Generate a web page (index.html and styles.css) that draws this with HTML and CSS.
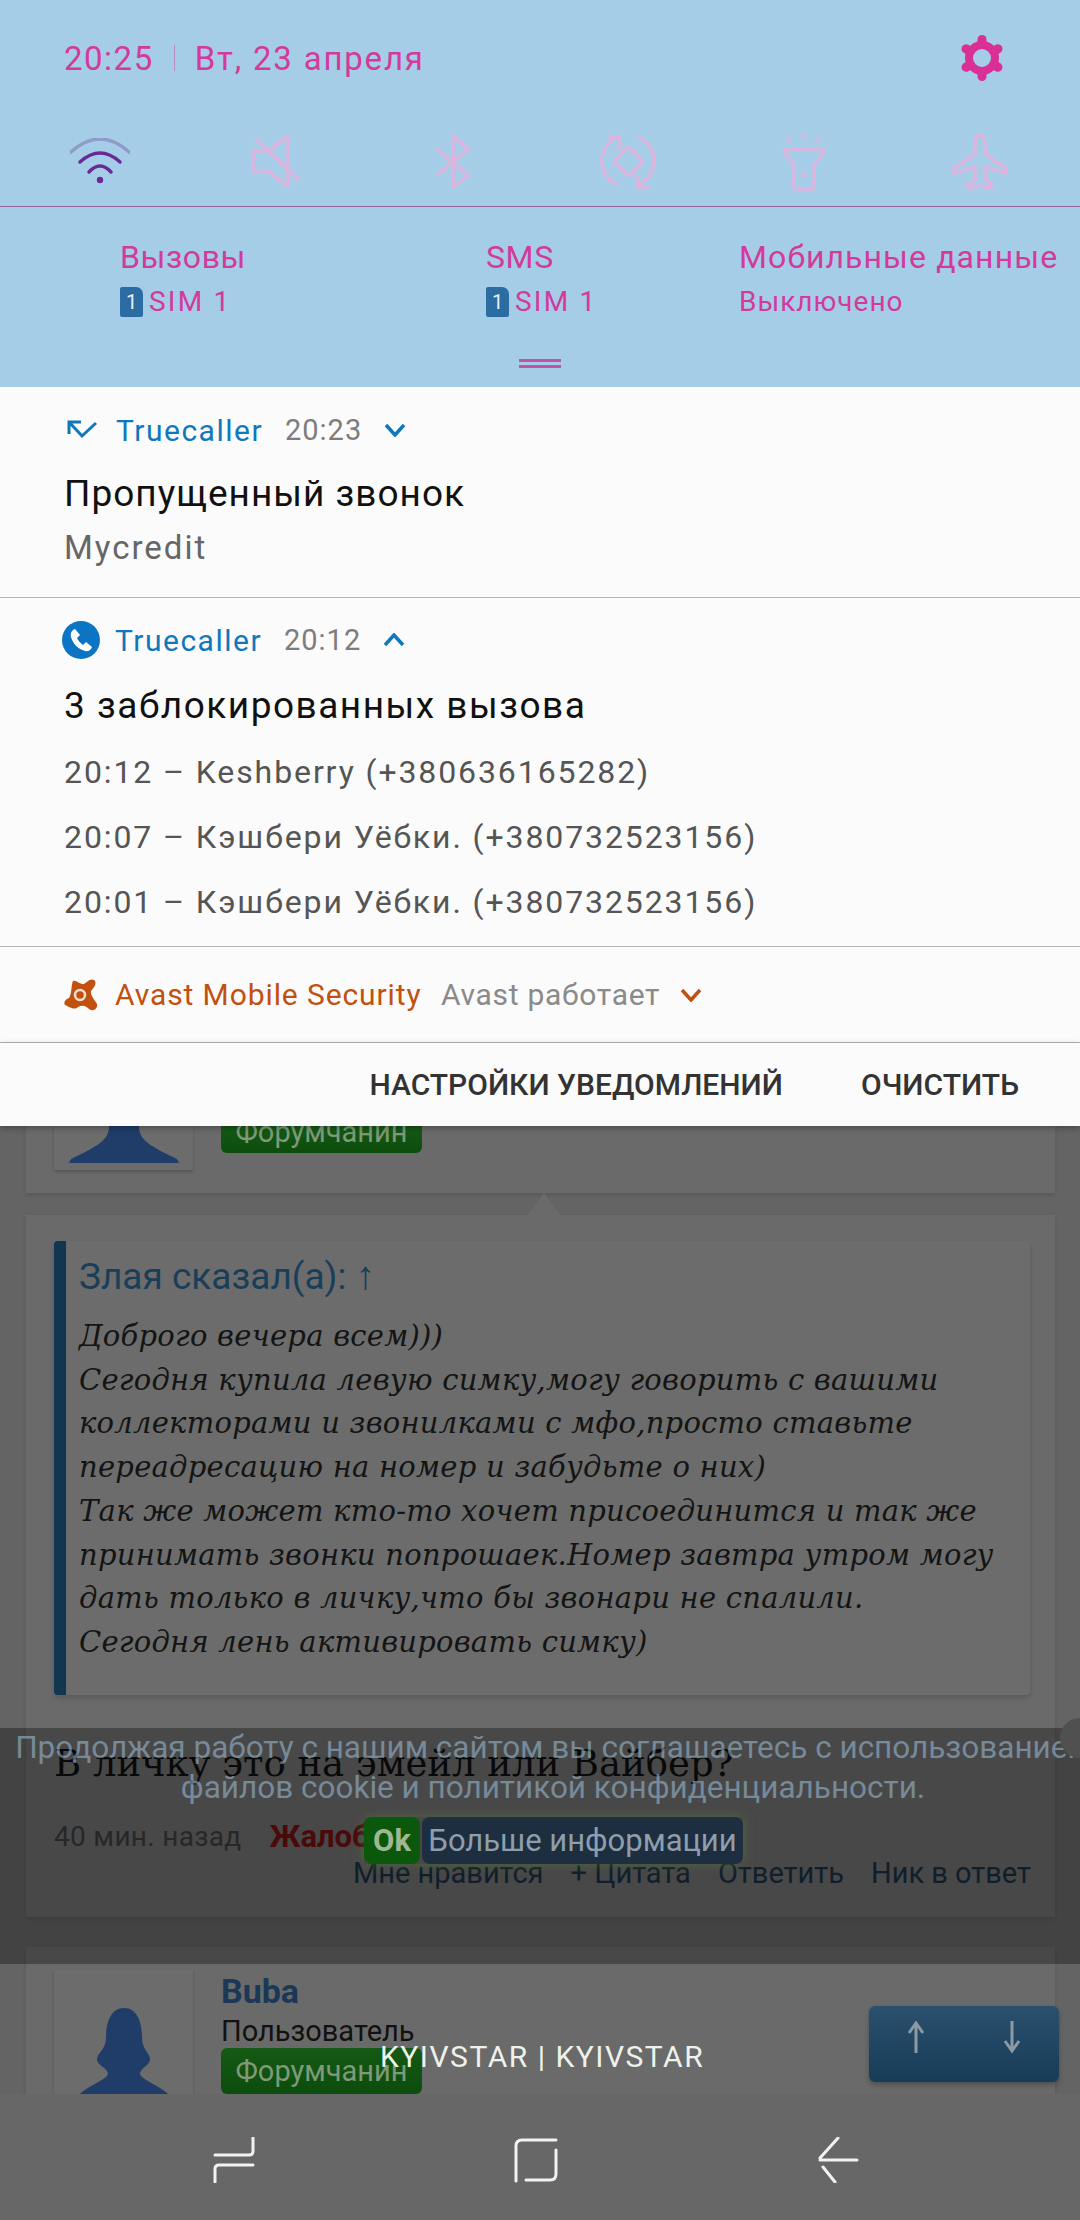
FILE: index.html
```html
<!DOCTYPE html>
<html lang="ru">
<head>
    <meta charset="UTF-8">
    <title>Панель уведомлений</title>
    <link rel="stylesheet" href="styles.css">
</head>
<body>
    <div class="shade">
        <div class="status">
            <span class="clock">20:25</span>
            <span class="status-sep"></span>
            <span class="date">Вт, 23 апреля</span>
            <svg class="gear" width="48" height="48" viewBox="0 0 48 48">
                <circle cx="24" cy="24" r="13" fill="none" stroke="#d92f96" stroke-width="8"/>
                <g stroke="#d92f96" stroke-width="9" stroke-linecap="round">
                    <path d="M24 9V5.500"/>
                    <path d="M24 39V42.500"/>
                    <path d="M11 16.500L8 14.750"/>
                    <path d="M37 16.500L40 14.750"/>
                    <path d="M11 31.500L8 33.250"/>
                    <path d="M37 31.500L40 33.250"/>
                </g>
            </svg>
        </div>
        <div class="toggles">
            <svg width="60" height="46" viewBox="0 0 60 46" fill="none" stroke-linecap="round">
                <path d="M1 14Q30 -12 59 14" stroke="#8f9cc8" stroke-width="3.500"/>
                <path d="M10 24Q30 6 50 24" stroke="#6a2a96" stroke-width="3.500"/>
                <path d="M19 34Q30 22 41 34" stroke="#6a2a96" stroke-width="3.500"/>
                <circle cx="30" cy="42" r="3.200" fill="#6a2a96"/>
            </svg>
            <svg class="off" width="50" height="53" viewBox="0 0 50 53">
                <path d="M2 16V36H17L37 51V1L17 16Z"/>
                <path d="M4 3L49 46"/>
            </svg>
            <svg class="off" width="33" height="55" viewBox="0 0 33 55">
                <path d="M1 15L32 41L17 53V2L32 15L1 41"/>
            </svg>
            <svg class="off" width="57" height="55" viewBox="0 0 57 55">
                <path d="M18 3A26 26 0 0 0 18 51"/>
                <path d="M38 3A26 26 0 0 1 38 51"/>
                <path d="M7 3H20V15"/>
                <path d="M37 41V53H50"/>
                <rect x="18" y="17" width="21" height="21" rx="3" transform="rotate(45 28.500 27.500)"/>
            </svg>
            <svg class="off" width="42" height="59" viewBox="0 0 42 59">
                <path d="M4 6L7 10M21 2V8M36 6L33 10"/>
                <path d="M2 17H40V21L31 33V55Q31 57 29 57H13Q11 57 11 55V33L2 21Z"/>
                <path d="M21 39V45"/>
            </svg>
            <svg class="off" width="56" height="56" viewBox="0 0 56 56">
                <path d="M28 2C24 2 23 7 23 11V21L2 35V40L23 34V47L16 52V55L28 53L40 55V52L33 47V34L54 40V35L33 21V11C33 7 32 2 28 2Z"/>
            </svg>
        </div>
        <div class="sims">
            <div class="sim-col">
                <div class="sim-title">Вызовы</div>
                <div class="sim-sub"><span class="sim-icon">1</span>SIM 1</div>
            </div>
            <div class="sim-col">
                <div class="sim-title">SMS</div>
                <div class="sim-sub"><span class="sim-icon">1</span>SIM 1</div>
            </div>
            <div class="sim-col">
                <div class="sim-title sim-title-wide">Мобильные данные</div>
                <div class="sim-sub sim-off">Выключено</div>
            </div>
        </div>
        <div class="handle"></div>
    </div>

    <div class="notif notif-missed">
        <div class="notif-head">
            <svg class="app-icon" width="38" height="20" viewBox="0 0 38 20" fill="none" stroke="#0f78bd" stroke-width="3">
                <path d="M17 2H5V14M5 2L18 16L32 3"/>
            </svg>
            <span class="app-name">Truecaller</span>
            <span class="notif-time">20:23</span>
            <svg class="chevron" width="22" height="14" viewBox="0 0 22 14" fill="none" stroke="#0f78bd" stroke-width="3.500"><path d="M2 2L11 12L20 2"/></svg>
        </div>
        <div class="notif-title">Пропущенный звонок</div>
        <div class="notif-body">Mycredit</div>
    </div>

    <div class="notif notif-blocked">
        <div class="notif-head">
            <svg class="app-icon" width="38" height="38" viewBox="0 0 38 38">
                <circle cx="19" cy="19" r="19" fill="#0b75c4"/>
                <path d="M13 8C10 9 8 12 9 16C11 23 16 28 23 30C26 31 29 29 30 26L24 21L21 24C18 22 16 19 15 17L18 14Z" fill="#fff"/>
            </svg>
            <span class="app-name">Truecaller</span>
            <span class="notif-time">20:12</span>
            <svg class="chevron" width="22" height="14" viewBox="0 0 22 14" fill="none" stroke="#0f78bd" stroke-width="3.500"><path d="M2 12L11 2L20 12"/></svg>
        </div>
        <div class="notif-title">3 заблокированных вызова</div>
        <div class="call-lines">
            <div>20:12 – Keshberry (+380636165282)</div>
            <div>20:07 – Кэшбери Уёбки. (+380732523156)</div>
            <div>20:01 – Кэшбери Уёбки. (+380732523156)</div>
        </div>
    </div>

    <div class="notif notif-avast">
        <svg class="avast-icon" width="34" height="34" viewBox="0 0 34 34">
            <path d="M9 3C13 2 16 7 20 6C23 4 26 0 30 2C33 4 31 9 27 13C26 17 30 21 33 26C34 31 29 34 25 31C21 27 18 27 14 29C10 33 4 28 1 27C-1 24 2 21 5 20C8 16 7 7 9 3Z" fill="#c2500f"/>
            <circle cx="16" cy="17" r="5" fill="none" stroke="#f3dfd2" stroke-width="2.500"/>
        </svg>
        <span class="avast-name">Avast Mobile Security</span>
        <span class="avast-text">Avast работает</span>
        <svg class="chevron" width="22" height="14" viewBox="0 0 22 14" fill="none" stroke="#c2500f" stroke-width="3.500"><path d="M2 2L11 12L20 2"/></svg>
    </div>

    <div class="notif-actions">
        <span>НАСТРОЙКИ УВЕДОМЛЕНИЙ</span>
        <span>ОЧИСТИТЬ</span>
    </div>

    <div class="page">
        <div class="card card-top">
            <div class="user-row">
                <div class="avatar avatar-top">
                    <svg width="110" height="37" viewBox="0 0 110 37"><path d="M40 0H70C70 12 76 18 108 33L110 37H0L2 33C34 18 40 12 40 0Z" fill="#1f3d68"/></svg>
                </div>
                <div class="user-info">
                    <div class="badge badge-clipped">Форумчанин</div>
                </div>
            </div>
        </div>

        <div class="card card-post">
            <div class="quote">
                <div class="quote-author">Злая сказал(а): <span class="quote-arrow">↑</span></div>
                <div class="quote-text">Доброго вечера всем)))<br>Сегодня купила левую симку,могу говорить с вашими<br>коллекторами и звонилками с мфо,просто ставьте<br>переадресацию на номер и забудьте о них)<br>Так же может кто-то хочет присоединится и так же<br>принимать звонки попрошаек.Номер завтра утром могу<br>дать только в личку,что бы звонари не спалили.<br>Сегодня лень активировать симку)</div>
            </div>
            <div class="post-text">В личку это на эмейл или Вайбер?</div>
            <div class="post-meta">
                <span class="post-age">40 мин. назад</span>
                <span class="post-report">Жалоба</span>
            </div>
            <div class="post-links">
                <span>Мне нравится</span>
                <span>+ Цитата</span>
                <span>Ответить</span>
                <span>Ник в ответ</span>
            </div>
        </div>

        <div class="card card-next">
            <div class="user-row">
                <div class="avatar avatar-next">
                    <svg width="88" height="86" viewBox="0 0 88 86"><path d="M44 0C58 0 62 16 62 30C62 42 71 46 70 52C69 58 60 60 60 66C62 72 80 78 88 86H0C8 78 26 72 28 66C28 60 18 58 17 52C16 46 26 42 26 30C26 16 30 0 44 0Z" fill="#1f3d68"/></svg>
                </div>
                <div class="user-info">
                    <div class="user-name">Buba</div>
                    <div class="user-role">Пользователь</div>
                    <div class="badge">Форумчанин</div>
                </div>
            </div>
        </div>

        <div class="cookie-bar">
            <div class="cookie-text">Продолжая работу с нашим сайтом вы соглашаетесь с использованием<br>файлов cookie и политикой конфиденциальности.</div>
            <div class="cookie-buttons">
                <span class="cookie-ok">Ok</span>
                <span class="cookie-more">Больше информации</span>
            </div>
            <span class="cookie-close"></span>
        </div>

        <div class="scroll-btn">
            <svg width="20" height="34" viewBox="0 0 20 34" fill="none" stroke="#8d9aa3" stroke-width="3"><path d="M10 33V3M3 13L10 3L17 13"/></svg>
            <svg width="20" height="34" viewBox="0 0 20 34" fill="none" stroke="#8d9aa3" stroke-width="3"><path d="M10 1V31M3 21L10 31L17 21"/></svg>
        </div>

        <div class="carrier">KYIVSTAR | KYIVSTAR</div>
    </div>

    <div class="navbar">
        <svg width="42" height="46" viewBox="0 0 42 46" fill="none" stroke="#f2f2f2" stroke-width="3" stroke-linecap="round">
            <path d="M40 1V14Q40 18 36 18H2"/>
            <path d="M40 28H6Q2 28 2 32V45"/>
        </svg>
        <svg width="44" height="46" viewBox="0 0 44 46" fill="none" stroke="#f2f2f2" stroke-width="3" stroke-linecap="round">
            <path d="M42 3H8Q2 3 2 9V44"/>
            <path d="M12 43H36Q42 43 42 37V13"/>
        </svg>
        <svg width="42" height="46" viewBox="0 0 42 46" fill="none" stroke="#f2f2f2" stroke-width="3" stroke-linecap="round">
            <path d="M21 1L3 21"/>
            <path d="M3 23H40"/>
            <path d="M6 30L18 45"/>
        </svg>
    </div>
</body>
</html>
```

FILE: styles.css
```css
html, body {
    margin: 0;
    padding: 0;
}
body {
    width: 1080px;
    height: 2220px;
    overflow: hidden;
    background-color: #676767;
    font-family: Roboto, 'Noto Sans', sans-serif;
    display: flex;
    flex-direction: column;
}
svg {
    display: block;
    flex: none;
}

/* quick settings */
.shade {
    height: 387px;
    background-color: #a6cde8;
    color: #d23a9c;
    flex: none;
}
.status {
    height: 116px;
    padding: 0 74px 0 64px;
    display: flex;
    align-items: center;
    font-size: 33px;
    white-space: nowrap;
}
.status-sep {
    width: 1px;
    height: 26px;
    background-color: #b98cc0;
    margin: 0 20px 0 20px;
}
.clock {
    letter-spacing: 1.5px;
}
.date {
    letter-spacing: 1.8px;
}
.gear {
    margin-left: auto;
}
.toggles {
    height: 91px;
    box-sizing: border-box;
    padding-left: 12px;
    display: grid;
    grid-template-columns: repeat(6, 176px);
    justify-items: center;
    align-items: center;
    border-bottom: 1px solid #98609f;
}
.off {
    fill: none;
    stroke: #dcb5df;
    stroke-width: 3.5;
}
.sims {
    padding: 30px 0 0 120px;
    display: grid;
    grid-template-columns: 366px 253px 1fr;
    white-space: nowrap;
}
.sim-title {
    font-size: 32px;
    line-height: 40px;
    letter-spacing: 0.6px;
}
.sim-title-wide {
    letter-spacing: 1.1px;
}
.sim-sub {
    margin-top: 8px;
    font-size: 28px;
    line-height: 34px;
    letter-spacing: 2.2px;
    display: flex;
    align-items: center;
}
.sim-off {
    letter-spacing: 1px;
}
.sim-icon {
    width: 23px;
    height: 30px;
    margin-right: 6px;
    background-color: #2b6ca3;
    color: #e6f0f7;
    border-radius: 2px 7px 2px 2px;
    font-size: 20px;
    line-height: 30px;
    letter-spacing: 0;
    text-align: center;
}
.handle {
    width: 42px;
    height: 3px;
    margin: 40px auto 0;
    border-top: 3px solid #c054aa;
    border-bottom: 3px solid #c054aa;
}

/* notifications */
.notif {
    box-sizing: border-box;
    padding-left: 64px;
    background-color: #fbfbfb;
    border-bottom: 1px solid #b5b5b5;
    white-space: nowrap;
    flex: none;
}
.notif-missed {
    height: 211px;
    padding-top: 27px;
}
.notif-blocked {
    height: 349px;
    padding-top: 23px;
}
.notif-avast {
    height: 96px;
    display: flex;
    align-items: center;
}
.notif-head {
    height: 38px;
    display: flex;
    align-items: center;
    font-size: 30px;
    letter-spacing: 1px;
}
.notif-missed .notif-head {
    height: 32px;
}
.app-icon {
    margin-left: -2px;
}
.notif-missed .app-icon {
    margin-left: 0;
    margin-right: -2px;
}
.notif-blocked .app-icon {
    margin-right: -1px;
}
.app-name {
    margin-left: 16px;
    width: 169px;
    color: #0f78bd;
    letter-spacing: 1.5px;
}
.notif-time {
    width: 99px;
    color: #7d7d7d;
    font-size: 29px;
}
.notif-title {
    margin-top: 25px;
    font-size: 37px;
    line-height: 46px;
    color: #111;
    letter-spacing: 1px;
}
.notif-blocked .notif-title {
    margin-top: 24px;
    letter-spacing: 1.5px;
}
.notif-body {
    margin-top: 11px;
    font-size: 33px;
    line-height: 40px;
    color: #666;
    letter-spacing: 2px;
}
.call-lines {
    margin-top: 11px;
    font-size: 32px;
    line-height: 65px;
    color: #555;
    letter-spacing: 1.9px;
}
.avast-icon {
    margin-right: 17px;
}
.avast-name {
    width: 326px;
    font-size: 30px;
    color: #c2500f;
    letter-spacing: 0.9px;
}
.avast-text {
    width: 239px;
    font-size: 30px;
    color: #8a8a8a;
    letter-spacing: 0.7px;
}
.notif-actions {
    height: 83px;
    padding-right: 61px;
    background-color: #fbfbfb;
    display: flex;
    justify-content: flex-end;
    align-items: center;
    gap: 78px;
    font-size: 30px;
    font-weight: 500;
    color: #333;
    white-space: nowrap;
    box-shadow: 0 2px 6px rgba(0, 0, 0, 0.3);
    position: relative;
    z-index: 1;
    flex: none;
}

/* forum page behind the shade */
.page {
    height: 968px;
    padding: 0 25px 0 26px;
    background-color: #646464;
    position: relative;
    overflow: hidden;
    flex: none;
}
.card {
    background-color: #6a6a6a;
    box-shadow: 0 2px 4px rgba(0, 0, 0, 0.12);
    padding: 0 28px;
}
.card-top {
    height: 67px;
    position: relative;
}
.card-top::after {
    content: "";
    position: absolute;
    left: 502px;
    bottom: -22px;
    border-left: 16px solid transparent;
    border-right: 16px solid transparent;
    border-bottom: 22px solid #6a6a6a;
}
.card-post {
    margin-top: 22px;
    height: 702px;
    padding-top: 26px;
    box-sizing: border-box;
}
.card-next {
    margin-top: 30px;
    padding-top: 23px;
    height: 160px;
}
.user-row {
    display: flex;
    gap: 28px;
}
.avatar {
    width: 139px;
    background-color: #6c6c6c;
    box-shadow: 0 2px 3px rgba(0, 0, 0, 0.2);
    display: flex;
    justify-content: center;
    align-items: flex-end;
}
.avatar-top {
    height: 44px;
}
.avatar-top svg {
    margin-bottom: 7px;
}
.avatar-next {
    height: 150px;
}
.avatar-next svg {
    margin-bottom: 26px;
}
.badge {
    width: 201px;
    height: 46px;
    background: linear-gradient(#155a15, #0c4c0c);
    border-radius: 6px;
    color: #7e9a78;
    font-size: 29px;
    line-height: 46px;
    text-align: center;
}
.badge-clipped {
    height: 27px;
    line-height: 12px;
    border-radius: 0 0 6px 6px;
    overflow: hidden;
}
.user-name {
    font-size: 34px;
    font-weight: 700;
    line-height: 44px;
    color: #1b3856;
    margin-top: -1px;
}
.user-role {
    font-size: 29px;
    line-height: 36px;
    color: #111;
}
.user-role + .badge {
    margin-top: -1px;
}
.quote {
    height: 454px;
    box-sizing: border-box;
    padding: 12px 0 0 13px;
    width: 976px;
    background-color: #6c6c6c;
    border-left: 12px solid #123550;
    border-radius: 4px;
    box-shadow: 0 3px 5px rgba(0, 0, 0, 0.15);
}
.quote-author {
    font-size: 37px;
    line-height: 46px;
    color: #1b3e58;
}
.quote-arrow {
    font-size: 40px;
    font-weight: 300;
}
.quote-text {
    margin-top: 15px;
    font-family: 'DejaVu Serif', serif;
    font-style: italic;
    font-size: 29px;
    line-height: 43.700px;
    letter-spacing: 0.25px;
    color: #141414;
    white-space: nowrap;
}
.post-text {
    margin-top: 45px;
    font-family: 'DejaVu Serif', serif;
    font-size: 37px;
    line-height: 48px;
    color: #0e0e0e;
    white-space: nowrap;
}
.post-meta {
    margin-top: 31px;
    font-size: 28px;
    line-height: 36px;
    display: flex;
    gap: 28px;
    letter-spacing: 0.3px;
}
.post-age {
    color: #3a3a3a;
}
.post-report {
    font-size: 31px;
    color: #6f1010;
    font-weight: 700;
    letter-spacing: 0;
}
.post-links {
    margin-right: -4px;
    display: flex;
    justify-content: flex-end;
    gap: 27px;
    font-size: 29px;
    line-height: 36px;
    color: #182e40;
}
.cookie-bar {
    position: absolute;
    left: 0;
    top: 602px;
    width: 1080px;
    height: 236px;
    background-color: rgba(0, 0, 0, 0.32);
}
.cookie-text {
    width: 1106px;
    font-size: 31.500px;
    line-height: 40px;
    color: rgba(166, 205, 232, 0.5);
    text-align: center;
    white-space: nowrap;
}
.cookie-buttons {
    position: absolute;
    left: 364px;
    top: 89px;
    display: flex;
    gap: 2px;
    box-shadow: 0 0 10px rgba(90, 130, 60, 0.5);
}
.cookie-ok, .cookie-more {
    height: 47px;
    line-height: 47px;
    border-radius: 8px;
    font-size: 31px;
}
.cookie-ok {
    width: 56px;
    background-color: #0b570b;
    color: #a0b890;
    font-weight: 700;
    text-align: center;
}
.cookie-more {
    width: 321px;
    background-color: #1d2e40;
    color: #8e9eac;
    text-align: center;
}
.cookie-close {
    position: absolute;
    right: -20px;
    top: -10px;
    width: 40px;
    height: 40px;
    border-radius: 50%;
    background-color: #505050;
}
.scroll-btn {
    position: absolute;
    left: 869px;
    top: 880px;
    width: 190px;
    height: 76px;
    box-sizing: border-box;
    padding: 14px 37px 0;
    background: linear-gradient(#2a506e, #173c58);
    border-radius: 6px;
    box-shadow: 0 3px 5px rgba(0, 0, 0, 0.25);
    display: flex;
    justify-content: space-between;
    align-items: flex-start;
}
.carrier {
    position: absolute;
    left: 380px;
    top: 912px;
    font-size: 30px;
    line-height: 38px;
    letter-spacing: 1.5px;
    color: #eef2ea;
    white-space: nowrap;
}

/* bottom nav */
.navbar {
    height: 126px;
    box-sizing: border-box;
    padding: 43px 221px 0 213px;
    display: flex;
    justify-content: space-between;
    align-items: flex-start;
    flex: none;
}
```
